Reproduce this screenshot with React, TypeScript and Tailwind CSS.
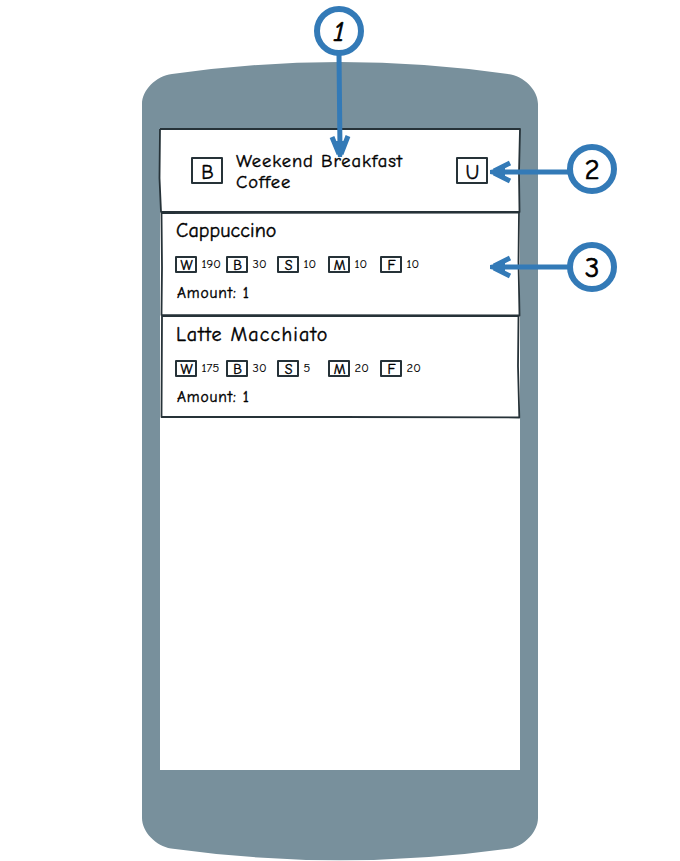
import React from "react";

type Stat = { icon: string; value: string; width: string };
type Drink = { name: string; tracking: string; stats: Stat[]; amount: number };

const drinks: Drink[] = [
  {
    name: "Cappuccino",
    tracking: "tracking-[0.1px]",
    amount: 1,
    stats: [
      { icon: "W", value: "190", width: "w-[51px]" },
      { icon: "B", value: "30", width: "w-[51px]" },
      { icon: "S", value: "10", width: "w-[51px]" },
      { icon: "M", value: "10", width: "w-[52px]" },
      { icon: "F", value: "10", width: "w-[52px]" },
    ],
  },
  {
    name: "Latte Macchiato",
    tracking: "tracking-[1.15px]",
    amount: 1,
    stats: [
      { icon: "W", value: "175", width: "w-[51px]" },
      { icon: "B", value: "30", width: "w-[51px]" },
      { icon: "S", value: "5", width: "w-[51px]" },
      { icon: "M", value: "20", width: "w-[52px]" },
      { icon: "F", value: "20", width: "w-[52px]" },
    ],
  },
];

function PhoneBody() {
  return (
    <svg className="absolute inset-0" width="680" height="861" viewBox="0 0 680 861">
      <path
        fill="#78909c"
        d="M142 104C142 90 156 76 172 74Q340 50 508 74C524 76 538 90 538 104V818C538 832 524 846 510 848.500Q340 872 171 848.500C156 846 142 832 142 818Z"
      />
    </svg>
  );
}

function Sketch({ paths, height }: { paths: string[]; height: number }) {
  return (
    <svg className="pointer-events-none absolute inset-0 overflow-visible" width="360" height={height} fill="none" stroke="#263238" strokeLinejoin="round">
      {paths.map((d) => (
        <path key={d} d={d} strokeWidth="1.800" />
      ))}
    </svg>
  );
}

function HeaderButton({ label }: { label: string }) {
  return (
    <div className="flex h-[27px] w-8 items-center justify-center rounded-[1px] border-2 border-[#263238] pl-px pt-[5px] text-[20px] leading-none">
      {label}
    </div>
  );
}

function StatItem({ icon, value, width }: Stat) {
  return (
    <div className={"flex items-center gap-1 " + width}>
      <span className="flex h-[17px] w-[22px] shrink-0 items-center justify-center rounded-[1px] border-2 border-[#263238] pl-px pt-[3px] text-[14px] leading-none">
        {icon}
      </span>
      <span className="pl-[0.5px] text-[12.5px] leading-none tracking-[0.1px] [-webkit-text-stroke:0.15px_black]">{value}</span>
    </div>
  );
}

function DrinkRow({ drink }: { drink: Drink }) {
  return (
    <div className="h-full pl-[15px] pt-2">
      <h2 className={"h-[22px] pl-px text-[20px] leading-[22px] " + drink.tracking}>{drink.name}</h2>
      <div className="mt-[14px] flex h-[17px]">
        {drink.stats.map((s) => (
          <StatItem key={s.icon} {...s} />
        ))}
      </div>
      <p className="mt-[11px] pl-[2px] text-[15.5px] leading-[18px] tracking-[0.85px]">Amount: {drink.amount}</p>
    </div>
  );
}

function Marker({ n, place }: { n: number; place: string }) {
  return (
    <div className={"absolute flex h-[50px] w-[50px] items-center justify-center rounded-full border-[6px] border-[#337ab7] bg-white text-[29px] leading-none [-webkit-text-stroke:0.7px_black] " + place}>
      {n}
    </div>
  );
}

function Arrows() {
  return (
    <svg className="pointer-events-none absolute inset-0" width="680" height="861" fill="none" stroke="#337ab7" strokeWidth="5">
      <path d="M339 54L340 150M332 137L339 154M348 136L341 154" />
      <path d="M568 172H497M510 163L494 171M510 181L494 173" />
      <path d="M568 267H497M510 258L494 266M510 276L494 268" />
      <path fill="#337ab7" stroke="none" d="M335 141L345 141L342 157H338ZM505 167V177L490 174V170ZM505 262V272L490 269V265Z" />
    </svg>
  );
}

export default function App() {
  return (
    <main className="relative h-[861px] w-[680px] overflow-hidden bg-white pl-40 pt-32 font-['Comic_Sans_MS','Comic_Neue',Lato,sans-serif] text-black [font-feature-settings:'liga'_0,'calt'_0,'clig'_0,'dlig'_0,'ccmp'_0] [-webkit-text-stroke:0.4px_black]">
      <PhoneBody />
      <section className="relative h-[642px] w-[360px] bg-white">
        <header className="relative flex h-[84px] items-center pl-[31px] pr-8">
          <Sketch height={84} paths={["M0 1L360 1L359 45L359.500 84L1 84L-.5 50L0 1"]} />
          <HeaderButton label="B" />
          <h1 className="ml-[13px] mt-1 w-[200px] text-[18.5px] leading-[21.5px] tracking-[0.95px]">
            Weekend Breakfast
            <br />
            Coffee
          </h1>
          <div className="ml-auto">
            <HeaderButton label="U" />
          </div>
        </header>
        <article className="relative h-[104px]">
          <Sketch height={104} paths={["M1.500 1L359 .5L358.500 50L359.500 103.500L1.500 103L2 55L1.500 1"]} />
          <DrinkRow drink={drinks[0]} />
        </article>
        <article className="relative h-[102px]">
          <Sketch height={102} paths={["M2 0L358.500 0L358 50L359.300 101.500L180 101L1.500 101L2 0"]} />
          <DrinkRow drink={drinks[1]} />
        </article>
      </section>
      <Arrows />
      <Marker n={1} place="left-[314px] top-[6px] [font-style:oblique_8deg]" />
      <Marker n={2} place="left-[567px] top-[144px]" />
      <Marker n={3} place="left-[567px] top-[242px]" />
    </main>
  );
}
